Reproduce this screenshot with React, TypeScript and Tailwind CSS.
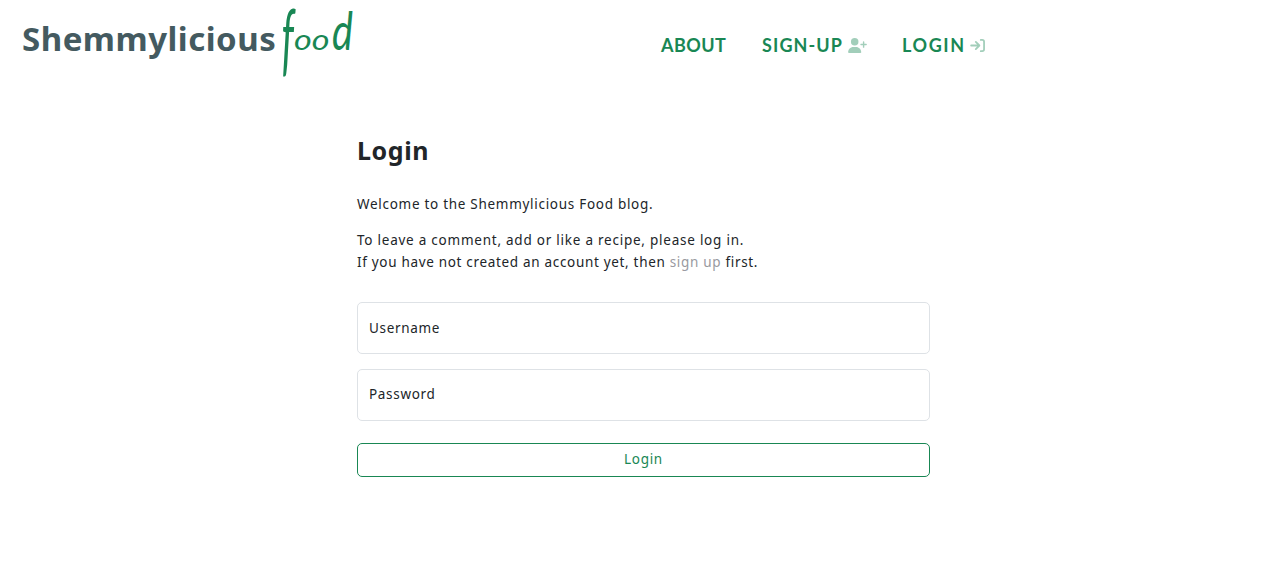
import { FaUserPlus } from "react-icons/fa6";

function Logo() {
  return (
    <a className="flex w-[334px] shrink-0 items-start text-[#445a60]" href="#home">
      <span className="w-[259px] shrink-0 pt-[15px] font-['Noto_Sans',sans-serif] text-[33px] leading-[48px] font-bold tracking-[0.5px]">
        Shemmylicious
      </span>
      <svg className="h-[88px] w-[76px] shrink-0 overflow-visible font-['Lato',sans-serif] italic" viewBox="0 0 76 88" fill="#198754">
        <text fontSize="80" transform="translate(0.5 65.5) scale(.48 1)">f</text>
        <text fontSize="29" transform="translate(13 50) scale(1.18 1)">oo</text>
        <text fontSize="35" transform="translate(51 50) scale(1.13 1.48)">d</text>
      </svg>
    </a>
  );
}

function LoginIcon() {
  return (
    <svg className="h-[15px] w-[15px]" viewBox="0 0 16 16" fill="none" stroke="currentColor" strokeWidth="1.9" strokeLinecap="round" strokeLinejoin="round">
      <path d="M1.2 8H9.8M6.2 4.2L10 8L6.2 11.8M11.5 2H13Q15 2 15 4V12Q15 14 13 14H11.5" />
    </svg>
  );
}

export default function App() {
  return (
    <div className="min-h-[582px] bg-white text-[#212529]">
      <header className="flex h-[90px] items-start pl-[22px]">
        <Logo />
        <nav className="ml-[305px] flex h-[91px] items-center font-['Lato',sans-serif] text-[18px] font-bold text-[#198754]">
          <a className="w-[101px] tracking-[0.45px]" href="#about">ABOUT</a>
          <a className="flex w-[140px] items-center gap-[5px]" href="#signup">
            <span className="w-[81px] tracking-[1.1px] whitespace-nowrap">SIGN-UP</span>
            <FaUserPlus className="mb-[1px] h-[15px] w-[19px] opacity-40" />
          </a>
          <a className="flex items-center gap-[5px]" href="#login">
            <span className="w-[63px] tracking-[1.6px]">LOGIN</span>
            <span className="opacity-40"><LoginIcon /></span>
          </a>
        </nav>
      </header>
      <main className="mx-auto w-[573px] font-['Noto_Sans',sans-serif] text-[13.5px] tracking-[0.68px]">
        <h1 className="pt-[42px] text-[25px] leading-[36px] font-bold tracking-[0.6px]">Login</h1>
        <p className="mt-[25px] leading-[22px] tracking-[0.71px]">Welcome to the Shemmylicious Food blog.</p>
        <p className="mt-[14px] leading-[22px] whitespace-nowrap">
          <span className="tracking-[0.76px]">To leave a comment, add or like a recipe, please log in.</span>
          <br />
          If you have not created an account yet, then <a className="text-[#999aa0]" href="#signup">sign up</a> first.
        </p>
        <form className="mt-[29px] flex flex-col">
          <label className="flex h-[52px] items-center rounded-[5px] border border-[#dee2e6] px-[11px] pt-[1px]">Username</label>
          <label className="mt-[15px] flex h-[52px] items-center rounded-[5px] border border-[#dee2e6] px-[11px] pb-[1px]">Password</label>
          <button type="button" className="mt-[22px] h-[34px] rounded-[5px] border border-[#198754] pb-[1px] text-[#198754]">Login</button>
        </form>
      </main>
    </div>
  );
}
